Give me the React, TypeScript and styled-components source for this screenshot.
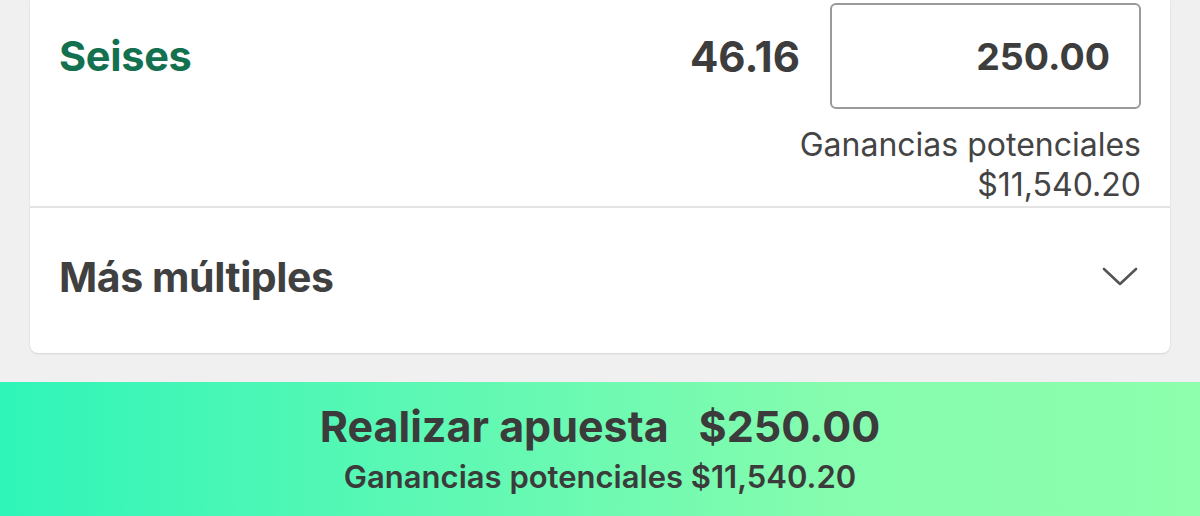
import React from 'react';
import styled, { createGlobalStyle } from 'styled-components';

const GlobalStyle = createGlobalStyle`
  html, body {
    margin: 0;
    padding: 0;
    background: #f0f0f0;
    font-family: Inter, "Noto Sans", "Liberation Sans", sans-serif;
  }
`;

const Page = styled.div`
  width: 1200px;
  height: 516px;
  overflow: hidden;
  display: flex;
  flex-direction: column;
  background: #f0f0f0;
`;

const Card = styled.section`
  margin: 0 30px;
  background: #ffffff;
  border-radius: 0 0 8px 8px;
  box-shadow: 0 1px 2px rgba(0, 0, 0, 0.12);
`;

const SelectionBlock = styled.div`
  padding: 3px 29px 0 29px;
  height: 208px;
  box-sizing: border-box;
  border-bottom: 2px solid #e4e4e4;
`;

const SelectionRow = styled.div`
  display: flex;
  align-items: center;
  gap: 30px;
`;

const SelectionName = styled.div`
  flex: 1;
  font-size: 41.5px;
  font-weight: 700;
  color: #137150;
  letter-spacing: -0.3px;
`;

const Odds = styled.div`
  font-size: 42px;
  font-weight: 700;
  color: #3d3d3d;
`;

const StakeInput = styled.input`
  width: 311px;
  height: 106px;
  box-sizing: border-box;
  border: 2px solid #9a9a9a;
  border-radius: 6px;
  padding: 0 29px 0 10px;
  text-align: right;
  font-family: inherit;
  font-size: 37.5px;
  font-weight: 700;
  color: #3d3d3d;
  background: #fff;
  outline: none;
`;

const Potential = styled.div`
  margin-top: 16px;
  text-align: right;
  font-size: 32px;
  line-height: 40px;
  color: #444444;
`;

const MoreRow = styled.div`
  height: 145px;
  box-sizing: border-box;
  padding: 0 32px 8px 29px;
  display: flex;
  align-items: center;
  justify-content: space-between;
`;

const MoreTitle = styled.div`
  font-size: 41px;
  font-weight: 700;
  color: #404040;
  letter-spacing: -0.4px;
`;

const Spacer = styled.div`
  height: 29px;
`;

const PlaceBet = styled.button`
  flex: 1;
  border: none;
  margin: 0;
  display: flex;
  flex-direction: column;
  align-items: center;
  justify-content: center;
  gap: 8px;
  padding-bottom: 4px;
  background: linear-gradient(90deg, #2ff5b8 0%, #5cf8b4 35%, #86fcae 70%, #8dffad 100%);
  font-family: inherit;
  color: #3b3b3b;
  cursor: pointer;
`;

const PlaceTitle = styled.span`
  display: flex;
  gap: 30px;
  font-size: 43px;
  font-weight: 700;
  line-height: 50px;
`;

const PlaceSub = styled.span`
  font-size: 31px;
  font-weight: 600;
  line-height: 36px;
`;

const Chevron = () => (
  <svg width="36" height="20" viewBox="0 0 36 20" fill="none">
    <path d="M2 2 L18 17 L34 2" stroke="#555" strokeWidth="2.6" strokeLinecap="round" strokeLinejoin="round" />
  </svg>
);

export default function App() {
  return (
    <>
      <GlobalStyle />
      <Page>
        <Card>
          <SelectionBlock>
            <SelectionRow>
              <SelectionName>Seises</SelectionName>
              <Odds>46.16</Odds>
              <StakeInput defaultValue="250.00" />
            </SelectionRow>
            <Potential>
              Ganancias potenciales
              <br />
              $11,540.20
            </Potential>
          </SelectionBlock>
          <MoreRow>
            <MoreTitle>Más múltiples</MoreTitle>
            <Chevron />
          </MoreRow>
        </Card>
        <Spacer />
        <PlaceBet>
          <PlaceTitle>
            <span>Realizar apuesta</span>
            <span>$250.00</span>
          </PlaceTitle>
          <PlaceSub>Ganancias potenciales $11,540.20</PlaceSub>
        </PlaceBet>
      </Page>
    </>
  );
}
